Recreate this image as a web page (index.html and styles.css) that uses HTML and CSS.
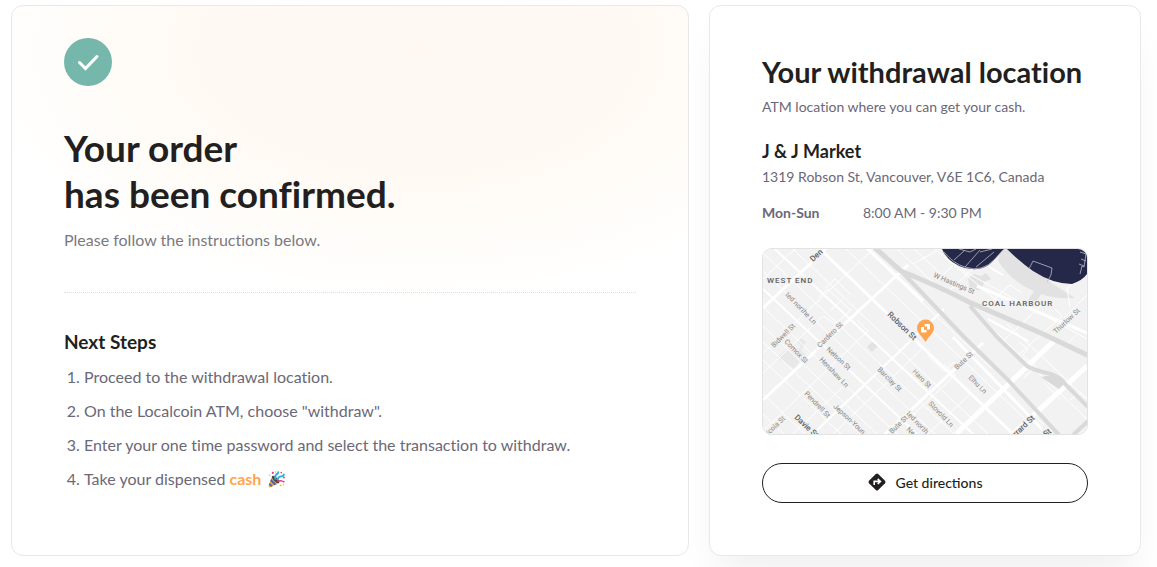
FILE: index.html
```html
<!DOCTYPE html>
<html lang="en">
<head>
<meta charset="utf-8">
<meta name="viewport" content="width=device-width, initial-scale=1">
<title>Order confirmed</title>
<link rel="stylesheet" href="styles.css">
</head>
<body>
<main class="page">
  <section class="card order">
    <svg class="check" viewBox="0 0 48 48" aria-hidden="true"><circle cx="24" cy="24" r="24"/><path d="M15.5 24.5l6 6L33 18.5"/></svg>
    <h1>Your order<br>has been confirmed.</h1>
    <p class="lead">Please follow the instructions below.</p>
    <hr>
    <h2>Next Steps</h2>
    <ol class="steps">
      <li>Proceed to the withdrawal location.</li>
      <li>On the Localcoin ATM, choose "withdraw".</li>
      <li>Enter your one time password and select the transaction to withdraw.</li>
      <li>Take your dispensed <strong>cash</strong>
        <svg class="party" viewBox="0 0 16 16" role="img" aria-label="party popper">
          <path d="M4 4.5L.5 14.2Q.3 15.6 1.8 15.5L10.500 11Z" fill="#f5ad35"/>
          <path d="M3 7.500l5 5-2 1-4-4zM1.600 11l3 3.200-1.500.700L.800 13z" fill="#4c62b5"/>
          <ellipse cx="7.200" cy="8" rx="1.900" ry="4.500" transform="rotate(-45 7.200 8)" fill="#554345"/>
          <path d="M7 8Q6 4 9 2.500Q10 1.500 9.200.5M8.500 8.500Q10 5 12.500 5T15 2.500" fill="none" stroke="#24b4e8" stroke-width="1.700"/>
          <path d="M9 10Q12 8 15.500 10.500" fill="none" stroke="#e8398d" stroke-width="1.300"/>
          <g fill="#e8398d"><circle cx="4.500" cy="1.800" r="1"/><circle cx="12.500" cy="1.500" r=".8"/><circle cx="15" cy="6" r=".9"/></g>
          <g fill="#f7b52c"><circle cx="7" cy="1" r=".7"/><circle cx="12" cy="13.500" r=".8"/><circle cx="14.500" cy="13" r=".7"/><circle cx="1.500" cy="4" r=".7"/></g>
        </svg>
      </li>
    </ol>
  </section>

  <section class="card location">
    <h2 class="title">Your withdrawal location</h2>
    <p class="note">ATM location where you can get your cash.</p>
    <h3>J &amp; J Market</h3>
    <p class="address">1319 Robson St, Vancouver, V6E 1C6, Canada</p>
    <dl class="hours"><dt>Mon-Sun</dt><dd>8:00 AM - 9:30 PM</dd></dl>
    <div class="map">
      <svg viewBox="0 0 324 185" preserveAspectRatio="xMidYMid slice" role="img" aria-label="Map of J &amp; J Market on Robson Street">
        <rect width="324" height="185" fill="#f2f2f2"/>
        <g fill="#e2e2e2">
          <path d="M238 0L235 12Q250 34 271 42L264 53L271 57L278 45Q290 50 312 49L290 35L246 0Z"/>
          <path d="M205 29l6-4 7 2 5-3 5 6-7 3-2 8-12 0z"/>
          <path d="M14 109l12-12 7 7 5-7-4-4 4-4 5 4-5 8 4 4-11 15z" fill="#e8e8e8"/>
          <path d="M104 98l5-5 6 4-6 6z"/>
        </g>
        <g fill="none" stroke="#fff" stroke-width="1">
          <path d="M0 165L21 185M0 145L42 185M0 111L78 185M0 93L97 185M0 77L114 185M0 58L134 185M0 22L172 185M0 4L191 185M30 0L225 185M83 0L263 171M103 0L228 119M134 0L149 14L183 45M151 0L188 34M172 0L233 51M197 20L324 90M222 73L340 185M244 75L324 150"/>
          <path d="M0 30L32 0M0 104L110 0M0 124L60 67L72 75L89 60M0 182L105 82L94 71M30 185L83 135M70 185L161 98M130 185L192 126L181 115M165 185L208 144M150 15L177 0M177 29L207 0M186 42L212 18M227 54L247 36L259 44M240 92L282 53M253 108L299 67L289 57M297 73L324 46M307 58L304 39L324 26"/>
          <path d="M56 48l9-8 22 21M68 61l12-11M62 39l10-9 16 16M191 113l-10 9-16-15M256 93l9 7-5 6 13 12-12 10M285 89l17 8 11-11M281 176l-12-12M297 150l-16-16M307 151l10-7 7 5"/>
        </g>
        <g fill="none" stroke="#fff" stroke-width="3">
          <path d="M57 0L250 185M105 0L160 52M190 88L279 180M0 59L63 0M0 151L145 16M122 185L220 94M214 37L324 84"/>
          <path d="M0 40L154 185M50 185L181 60M196 0L240 26M225 70L265 92M12 0L210 185" stroke-width="2"/>
        </g>
        <g fill="none" stroke="#fff" stroke-width="5"><path d="M193 185L291 92M250 185L324 117"/></g>
        <g fill="none" stroke="#d9d9d9" stroke-width="5">
          <path d="M111 -2L138 22Q175 37 206 53L280 85Q305 97 326 107"/>
          <path d="M138 22Q164 49 201 88L244 130L297 187M207 57L235 89L264 117Q270 121 288 125Q297 128 304 137L326 159M309 187L326 171" stroke-width="4"/>
          <path d="M278 128L296 140L302 134L289 126Z" fill="#d9d9d9" stroke="none"/>
        </g>
        <path d="M179 0Q185 14 202 19Q220 23 229 13L241 0ZM244 0Q257 13 270 22Q290 35 309 35Q320 31 324 25V0Z" fill="#252848"/>
        <g fill="none" stroke="#b9bbc4" stroke-width=".8">
          <path d="M181 3Q191 15 202 18Q219 24 232 10L240 1M191 11L201 2M202 18L217 1M213 18L231 3M196 0L207 3L213 0M217 3L229 0"/>
          <path d="M266 20l4-8 19 7-1 7-4 7M317 25l2-8 2 1 2-13M317 3l6 2M318 10l5 2M316 15l5 2"/>
        </g>
        <g class="streets">
          <text class="area" x="4" y="34">WEST END</text>
          <text class="area" x="219" y="57">COAL HARBOUR</text>
          <g class="major">
            <text transform="translate(50 13) rotate(-43)">Den</text>
            <text transform="translate(124 66) rotate(44)">Robson St</text>
            <text transform="translate(31 169) rotate(43)">Davie St</text>
            <text transform="translate(253 188) rotate(-44)">rrard St</text>
            <text transform="translate(283 188) rotate(-40)">St</text>
          </g>
          <text transform="translate(170 28) rotate(23)">W Hastings St</text>
          <text transform="translate(293 85) rotate(-43)">Thurlow St</text>
          <text transform="translate(22 46) rotate(46)">ted northe Ln</text>
          <text transform="translate(11 99) rotate(-45)">Bidwell St</text>
          <text transform="translate(21 93) rotate(46)">Comox St</text>
          <text transform="translate(57 99) rotate(-45)">Cardero St</text>
          <text transform="translate(63 101) rotate(43)">Nelson St</text>
          <text transform="translate(56 111) rotate(46)">Henshaw Ln</text>
          <text transform="translate(114 121) rotate(45)">Barclay St</text>
          <text transform="translate(149 123) rotate(45)">Haro St</text>
          <text transform="translate(194 121) rotate(-43)">Bute St</text>
          <text transform="translate(205 129) rotate(45)">Elhu Ln</text>
          <text transform="translate(41 145) rotate(46)">Pendrell St</text>
          <text transform="translate(70 158) rotate(43)">Jepson-Youn</text>
          <text transform="translate(6 186) rotate(-44)">icola St</text>
          <text transform="translate(129 185) rotate(-44)">Bute St</text>
          <text transform="translate(143 165) rotate(46)">ted north</text>
          <text transform="translate(143 181) rotate(43)">Ne</text>
          <text transform="translate(165 155) rotate(46)">Stovold Ln</text>
        </g>
        <path d="M162.500 93C159 87 154 84 154 79A8.500 8.500 0 0 1 171 79C171 84 166 87 162.500 93Z" fill="#ffa550"/>
        <g fill="#fff"><rect x="161.500" y="75" width="5.500" height="5.500" rx="1"/><rect x="158" y="78" width="5.500" height="5.500" rx="1"/></g>
        <path d="M161 77.500h3v3.500h-3z" fill="#ffa550"/>
      </svg>
    </div>
    <button class="directions" type="button">
      <svg viewBox="0 0 18 18" aria-hidden="true"><path d="M7.800 1Q9 0 10.200 1L17 7.800Q18 9 17 10.200L10.200 17Q9 18 7.800 17L1 10.200Q0 9 1 7.800Z" fill="#231f20"/><path d="M6.200 12V8.400h5M9.700 5.800l2.700 2.600-2.700 2.600" fill="none" stroke="#fff" stroke-width="1.600"/></svg>
      Get directions
    </button>
  </section>
</main>
</body>
</html>
```
FILE: styles.css
```css
* { box-sizing: border-box; }
body { margin: 0; background: #fff; color: #231f20; font-family: Lato, "Open Sans", sans-serif; font-variant-ligatures: none; }
h1, h2, h3, p, ol, dl, dd { margin: 0; }
.page { display: grid; grid-template-columns: 678fr 432fr; gap: 20px; padding: 5px 16px 11px 11px; overflow: hidden; }
.card { border: 1px solid #e6e8e9; border-radius: 12px; background: #fff; padding: 32px 52px 52px; }
.order {
  position: relative;
  z-index: 1;
  background: radial-gradient(ellipse 66% 46% at 60% 8%, #fff8f2 0%, #fff9f3 45%, #fffcf8 70%, #fff 100%) #fff;
}
.check { display: block; width: 48px; height: 48px; fill: #76b7ac; }
.check path { fill: none; stroke: #fff; stroke-width: 3; stroke-linecap: round; }
h1 { margin-top: 39px; font-size: 37px; line-height: 46px; font-weight: 700; }
.lead { margin-top: 11px; font-size: 16px; line-height: 24px; color: #7b7980; }
hr { height: 0; margin: 40px 0 36px; border: 0; border-top: 1px dotted #dedfe1; }
h2 { font-size: 19px; line-height: 26px; }
.steps { margin-top: 5px; padding-left: 20px; font-size: 16px; line-height: 34px; color: #6b6877; }
.steps strong { color: #ffa550; }
.party { width: 17px; height: 17px; margin-left: 2px; vertical-align: -3px; }
.location { padding-top: 48px; box-shadow: 0 28px 40px -8px rgba(0, 0, 0, .06); }
.location .title { font-size: 29px; line-height: 36px; white-space: nowrap; }
.note, .address, .hours { font-size: 14px; line-height: 20px; color: #6b6877; }
.note { margin-top: 7px; }
h3 { margin-top: 21px; font-size: 18px; line-height: 26px; }
.address { margin-top: 3px; }
.hours { display: grid; grid-template-columns: 101px 1fr; margin-top: 16px; }
.hours dt { font-weight: 700; }
.map { margin-top: 25px; border: 1px solid #e3e3e3; border-radius: 10px; overflow: hidden; }
.map svg { display: block; width: 100%; height: auto; }
.streets { font-family: Roboto, sans-serif; font-size: 7px; fill: #858585; stroke: #f2f2f2; stroke-width: 2px; paint-order: stroke; }
.major { font-size: 8px; font-weight: 500; fill: #5f5f5f; }
.area { font-size: 8px; font-weight: 500; letter-spacing: 1px; fill: #5f5f5f; }
.directions { display: flex; align-items: center; justify-content: center; gap: 10px; width: 100%; height: 40px; margin-top: 28px; padding: 0 0 2px; border: 1px solid #231f20; border-radius: 20px; background: #fff; color: #231f20; font: 500 14px Lato, sans-serif; }
.directions svg { width: 18px; height: 18px; }
```
